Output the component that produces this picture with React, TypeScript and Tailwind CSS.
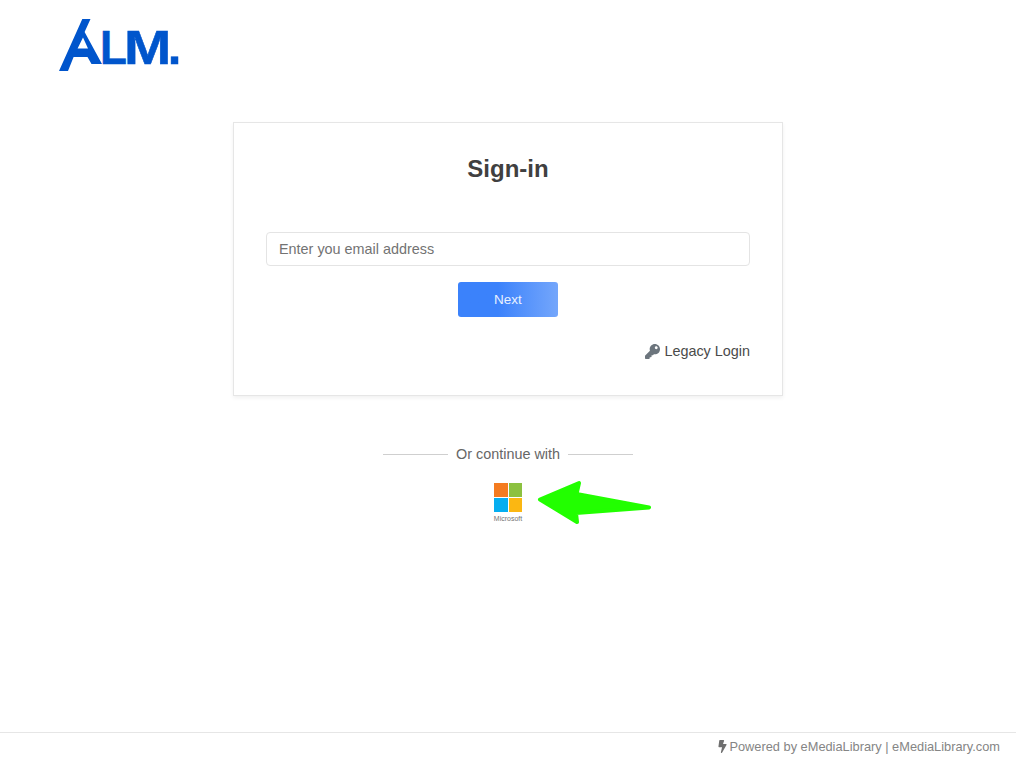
import { FaBolt, FaKey } from 'react-icons/fa';

const font = { fontFamily: '"Liberation Sans", Arial, sans-serif' };

const Logo = () => (
	<div className="flex items-start text-[#0055cc] text-[49px] leading-[53px] font-bold [-webkit-text-stroke:0.5px_#0055cc]">
		<svg width="41" height="52" viewBox="59 19 41 52" className="block shrink-0 overflow-visible">
			<path
				fill="#0055cc"
				fillRule="evenodd"
				d="M82.3 19 L90.5 19 L84.6 32 L102 64 L91.5 64 L87.5 57 L73.6 57 L68 71 L59 71 Z M83 37.5 L77.6 48.5 L88 48.5 Z"
			/>
		</svg>
		<span className="block mt-[1.5px] mr-[-3px] tracking-[-2.7px] scale-x-[0.9] origin-left">L</span>
		<span className="block mt-[1.5px] mr-[6px] tracking-[-3.4px] scale-x-[1.16] origin-left">M</span>
		<span className="block mt-[1.5px]">.</span>
	</div>
);

const MicrosoftButton = () => (
	<div className="relative flex flex-col items-center mt-[20px]">
		<div className="grid grid-cols-2 gap-[1px] w-[28px]">
			<div className="h-[14px] bg-[#f47b20]" />
			<div className="h-[14px] bg-[#8cc140]" />
			<div className="h-[14px] bg-[#06aef0]" />
			<div className="h-[14px] bg-[#fbb712]" />
		</div>
		<div className="mt-[2px] text-[7px] leading-[9px] text-[#737373]">Microsoft</div>
		{/* green arrow drawn on top of the screenshot */}
		<svg
			width="120"
			height="50"
			viewBox="535 478 120 50"
			className="absolute left-[41px] top-[-5px]"
		>
			<path
				fill="#22ff00"
				stroke="#22ff00"
				strokeWidth="4"
				strokeLinejoin="round"
				d="M540 499.5 L579 483 L576.5 494 L649 507.5 L576 513 L577 522 Z"
			/>
		</svg>
	</div>
);

const App = () => {
	return (
		<div className="flex flex-col h-[764px] bg-white" style={font}>
			<header className="pl-[59px] pt-[19px] h-[122px]">
				<Logo />
			</header>
			<main className="flex-1 flex flex-col items-center">
				<div className="w-[550px] h-[274px] px-[32px] pt-[31px] border border-[#e6e6e6] bg-white shadow-[0_2px_4px_rgba(0,0,0,0.06)]">
					<h1 className="text-center text-[24px] leading-[30px] font-bold text-[#404040]">
						Sign-in
					</h1>
					<input
						type="text"
						placeholder="Enter you email address"
						className="block w-full h-[34px] mt-[48px] px-[12px] text-[14.4px] rounded-[4px] border border-[#e4e4e4] bg-white placeholder:text-[#737373] outline-none"
					/>
					<div className="flex justify-center mt-[16px]">
						<button className="w-[100px] h-[35px] pt-[1px] rounded-[3px] text-[13.5px] text-[#e8f0ff] bg-gradient-to-r from-[#3b82fb] from-40% to-[#74a6fb]">
							Next
						</button>
					</div>
					<div className="flex items-center justify-end gap-[4px] mt-[25px] text-[14.4px] leading-[18px] text-[#4a4a4a]">
						<FaKey className="text-[15px] text-[#6c757d]" />
						<span>Legacy Login</span>
					</div>
				</div>
				<div className="flex items-center gap-[8px] mt-[49px] text-[14.4px] leading-[18px] text-[#666666]">
					<div className="w-[65px] h-px bg-[#cfcfcf]" />
					<span>Or continue with</span>
					<div className="w-[65px] h-px bg-[#cfcfcf]" />
				</div>
				<MicrosoftButton />
			</main>
			<footer className="h-[32px] border-t border-[#e6e6e6] pt-[6px] pr-[16px] flex items-start justify-end text-[12.8px] leading-[16px] text-[#858585]">
				<FaBolt className="text-[13px] mt-[1px] text-[#6f6f6f]" />
				<span>Powered by eMediaLibrary | eMediaLibrary.com</span>
			</footer>
		</div>
	);
};

export default App;
